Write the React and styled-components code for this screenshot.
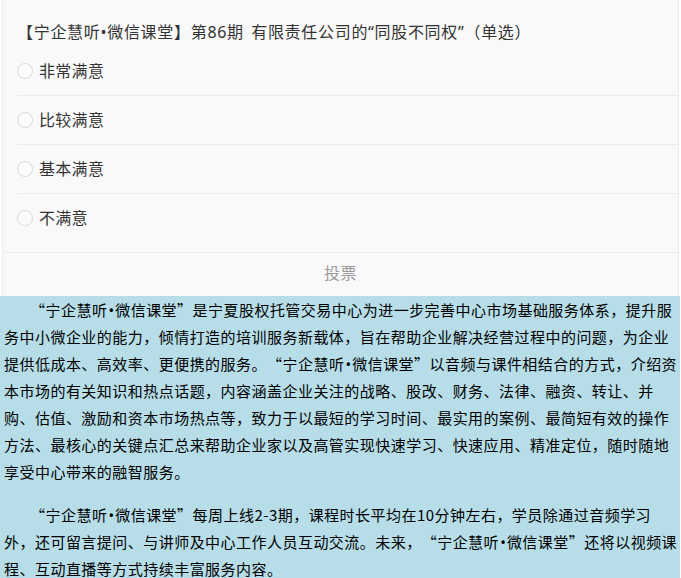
import React from "react";
import styled, { createGlobalStyle } from "styled-components";

const GlobalStyle = createGlobalStyle`
  html, body { margin: 0; padding: 0; background: #ffffff; }
  body { font-family: "Noto Sans", "Noto Sans CJK SC", sans-serif; }
  * { box-sizing: border-box; }
`;

const Page = styled.div`
  width: 680px;
`;

const VoteCard = styled.section`
  margin: 0 1px 0 2px;
  border-left: 1px solid #ececec;
  border-right: 1px solid #ececec;
  background: #f9f9f9;
  font-family: "Noto Sans", "Noto Sans CJK SC", sans-serif;
  color: #333;
  text-spacing-trim: space-all;
`;

const Title = styled.h2`
  margin: 0;
  padding: 20px 15px 3px 14px;
  font-size: 16px;
  font-weight: 400;
  line-height: 24px;
  letter-spacing: 0.7px;
  word-spacing: 2.5px;
  color: #333;
`;

const OptionList = styled.ul`
  list-style: none;
  margin: 0 0 0 14px;
  padding: 0 0 10px 0;
`;

const OptionRow = styled.li`
  display: flex;
  align-items: center;
  height: ${(p) => (p.$last ? "48px" : "49px")};
  padding-bottom: 1px;
  border-bottom: ${(p) => (p.$last ? "none" : "1px solid #ebebeb")};
  font-size: 16px;
  cursor: pointer;
`;

const Radio = styled.span`
  width: 16px;
  height: 16px;
  border-radius: 50%;
  border: 1px solid #d9d9d9;
  background: #fbfbfb;
  flex: none;
`;

const OptionLabel = styled.span`
  margin-left: 6px;
  line-height: 20px;
  letter-spacing: 0.3px;
  color: #333;
`;

const VoteBar = styled.div`
  display: flex;
  align-items: center;
  justify-content: center;
  height: 44px;
  padding-bottom: 5px;
  border-top: 1px solid #ebebeb;
  font-size: 16px;
  letter-spacing: 0.5px;
  color: #999;
  cursor: pointer;
`;

const Intro = styled.div`
  background: #b6dde8;
  padding: 0 1px 0 4px;
  font-family: "Noto Sans CJK SC", "Noto Sans", sans-serif;
  color: #000;
  text-spacing-trim: space-all;
`;

const IntroParagraph = styled.p`
  margin: 0 0 ${(p) => (p.$last ? "0" : "16px")} 0;
  font-size: 15px;
  line-height: 27px;
  letter-spacing: 0.47px;
  text-indent: 26px;
`;

const BrandName = styled.span`
  font-feature-settings: "fwid" 1;
`;

const Dot = styled.span`
  font-family: "Noto Sans", sans-serif;
  font-feature-settings: normal;
  line-height: 0;
  letter-spacing: 0;
  margin: 0 1.1px;
`;

const options = ["非常满意", "比较满意", "基本满意", "不满意"];

const Brand = () => (
  <BrandName>
    “宁企慧听<Dot>•</Dot>微信课堂”
  </BrandName>
);

export default function App() {
  return (
    <Page>
      <GlobalStyle />
      <VoteCard>
        <Title>【宁企慧听•微信课堂】第86期 有限责任公司的“同股不同权”（单选）</Title>
        <OptionList>
          {options.map((o, i) => (
            <OptionRow key={o} $last={i === options.length - 1}>
              <Radio />
              <OptionLabel>{o}</OptionLabel>
            </OptionRow>
          ))}
        </OptionList>
        <VoteBar>投票</VoteBar>
      </VoteCard>
      <Intro lang="zh-CN">
        <IntroParagraph>
          <Brand />是宁夏股权托管交易中心为进一步完善中心市场基础服务体系，提升服<br />
          务中小微企业的能力，倾情打造的培训服务新载体，旨在帮助企业解决经营过程中的问题，为企业<br />
          提供低成本、高效率、更便携的服务。<Brand />以音频与课件相结合的方式，介绍资<br />
          本市场的有关知识和热点话题，内容涵盖企业关注的战略、股改、财务、法律、融资、转让、并<br />
          购、估值、激励和资本市场热点等，致力于以最短的学习时间、最实用的案例、最简短有效的操作<br />
          方法、最核心的关键点汇总来帮助企业家以及高管实现快速学习、快速应用、精准定位，随时随地<br />
          享受中心带来的融智服务。
        </IntroParagraph>
        <IntroParagraph $last>
          <Brand />每周上线2-3期，课程时长平均在10分钟左右，学员除通过音频学习<br />
          外，还可留言提问、与讲师及中心工作人员互动交流。未来，<Brand />还将以视频课<br />
          程、互动直播等方式持续丰富服务内容。
        </IntroParagraph>
      </Intro>
    </Page>
  );
}
